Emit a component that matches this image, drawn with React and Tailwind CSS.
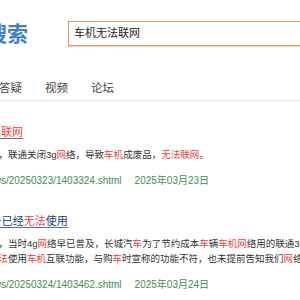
const red = "text-[#f03e3e]";

function Hl({ children }) {
  return <span className={red}>{children}</span>;
}

function Result({ title, lines, url, date }) {
  return (
    <article>
      <h3 className="whitespace-nowrap text-[11px] leading-[16px] text-[#1f3c7e] underline decoration-[#5a6b9a] underline-offset-[2px]">
        {title}
      </h3>
      <div className="mt-[7px] text-[9.5px] leading-[15px] text-[#333]">
        {lines.map((line, i) => (
          <p className="whitespace-nowrap" key={i}>
            {line}
          </p>
        ))}
      </div>
      <p className="mt-[12px] whitespace-nowrap text-[10px] leading-[14px] text-[#3d8f56]">
        {url}
        <span className="ml-[13px]">{date}</span>
      </p>
    </article>
  );
}

export default function App() {
  return (
    <div className="h-[300px] w-[300px] overflow-hidden bg-white font-['Liberation_Sans','Noto_Sans_CJK_SC',sans-serif]">
      <div className="-ml-[68px] w-[640px]">
        <header className="flex items-center pt-[21px]">
          <span className="ml-[12px] text-[21px] font-bold leading-[25px] text-[#3b7fd1]">
            汽车搜索
          </span>
          <div className="ml-[40px] flex h-[25px] w-[420px] items-center border border-[#e7955d] px-[5px] text-[11px] text-[#222] shadow-[0_1px_0_#f5cdb0]">
            车机无法联网
          </div>
        </header>

        <nav className="mt-[34px] flex gap-[23px] border-b border-[#e8e8e8] pb-[4px] pl-[21px] text-[11.5px] leading-[16px] text-[#444] shadow-[0_1px_1px_rgba(0,0,0,0.03)]">
          <span>投诉</span>
          <span>答疑</span>
          <span>视频</span>
          <span>论坛</span>
        </nav>

        <main className="space-y-[25px] pt-[23px]">
          <Result
            title={
              <>
                WEY<Hl>车机无法联网</Hl>
              </>
            }
            lines={[
              <>
                车辆使用两年后，联通关闭3g<Hl>网</Hl>络，导致<Hl>车机</Hl>成废品，<Hl>无法联网</Hl>。
              </>,
            ]}
            url="iqiche.com/news/20250323/1403324.shtml"
            date="2025年03月23日"
          />
          <Result
            title={
              <>
                <Hl>车机</Hl>的3G信号已经<Hl>无法</Hl>使用
              </>
            }
            lines={[
              <>
                提车是在两年前，当时4g<Hl>网</Hl>络早已普及，长城汽<Hl>车</Hl>为了节约成本<Hl>车</Hl>辆<Hl>车机网</Hl>络用的联通3g<Hl>网</Hl>络，
              </>,
              <>
                导致我们现在<Hl>无法</Hl>使用<Hl>车机</Hl>互联功能，与购<Hl>车</Hl>时宣称的功能不符，也未提前告知我们<Hl>网</Hl>络使用情况。
              </>,
            ]}
            url="iqiche.com/news/20250324/1403462.shtml"
            date="2025年03月24日"
          />
        </main>
      </div>
    </div>
  );
}
